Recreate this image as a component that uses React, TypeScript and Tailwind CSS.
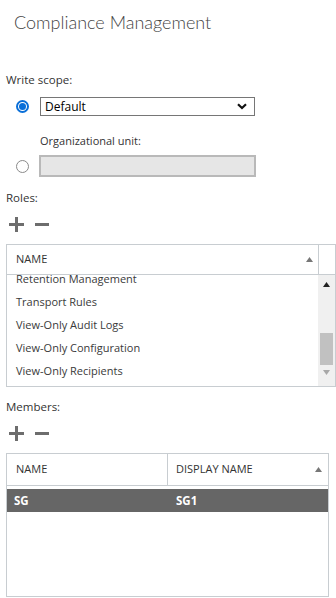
import React from "react";

const font = { fontFamily: '"Open Sans", "Noto Sans", sans-serif' };

function PlusMinus() {
  return (
    <div className="flex items-center h-[14px] pl-[9px] gap-[11px]">
      <svg width="15" height="15" viewBox="0 0 15 15">
        <rect x="6" y="0" width="3" height="15" fill="#6d6d6d" />
        <rect x="0" y="6" width="15" height="3" fill="#6d6d6d" />
      </svg>
      <svg width="14" height="15" viewBox="0 0 14 15">
        <rect x="0" y="6" width="14" height="3" fill="#6d6d6d" />
      </svg>
    </div>
  );
}

function SortUp({ color = "#777" }: { color?: string }) {
  return (
    <svg width="7" height="5" viewBox="0 0 7 5">
      <polygon points="3.5,0 7,5 0,5" fill={color} />
    </svg>
  );
}

export default function App() {
  const roles = [
    "Retention Management",
    "Transport Rules",
    "View-Only Audit Logs",
    "View-Only Configuration",
    "View-Only Recipients",
  ];
  return (
    <div
      className="w-[336px] h-[598px] bg-white overflow-hidden text-[#333]"
      style={font}
    >
      <div
        className="pt-[8px] pl-[14px] text-[18px] leading-[28px] font-light text-[#444]"
        style={{ fontFamily: 'Lato, "Open Sans", sans-serif' }}
      >
        Compliance Management
      </div>

      <div className="mt-[36px] pl-[6px] text-[11.5px] leading-[16px]">Write scope:</div>

      <div className="mt-[9px] flex items-center h-[19px]">
        <div className="w-[39px] flex justify-center pl-[5px]">
          <span className="w-[13px] h-[13px] rounded-full border-[2px] border-[#0a6fd8] flex items-center justify-center">
            <span className="w-[7px] h-[7px] rounded-full bg-[#0a6fd8]" />
          </span>
        </div>
        <div className="ml-[1px] w-[215px] h-[19px] border border-[#767676] bg-white flex items-center justify-between pl-[4px] pr-[7px]">
          <span className="text-[12px] text-black leading-none">Default</span>
          <svg width="10" height="7" viewBox="0 0 10 7">
            <polyline points="1,1.2 5,5 9,1.2" fill="none" stroke="#111" strokeWidth="2.2" />
          </svg>
        </div>
      </div>

      <div className="mt-[17px] pl-[40px] text-[11px] leading-[16px]">Organizational unit:</div>

      <div className="mt-[6px] flex items-center h-[22px]">
        <div className="w-[39px] flex justify-center pl-[5px]">
          <span className="w-[13px] h-[13px] rounded-full border border-[#8a8a8a] bg-white" />
        </div>
        <div className="w-[217px] h-[22px] border-[2px] border-[#b9b9b9] bg-[#e6e6e6]" />
      </div>

      <div className="mt-[13px] pl-[6px] text-[11.5px] leading-[16px]">Roles:</div>

      <div className="mt-[11px]">
        <PlusMinus />
      </div>

      <div className="mt-[13px] ml-[6px] w-[330px] border border-[#c8cdd1]">
        <div className="flex h-[30px] border-b border-[#c8cdd1]">
          <div className="flex-1 flex items-center justify-between pl-[9px] pr-[5px] border-r border-[#c8cdd1]">
            <span className="text-[11px]">NAME</span>
            <SortUp />
          </div>
          <div className="w-[16px]" />
        </div>
        <div className="flex h-[111px]">
          <div className="flex-1 overflow-hidden">
            <div className="-mt-[7px]">
              {roles.map((r) => (
                <div key={r} className="h-[23px] flex items-center pl-[9px] text-[11px] text-[#3a3a3a]">
                  {r}
                </div>
              ))}
            </div>
          </div>
          <div className="w-[17px] bg-[#f0f0f0] flex flex-col items-center">
            <div className="mt-[7px]">
              <SortUp color="#222" />
            </div>
            <div className="mt-[46px] w-[13px] h-[32px] bg-[#c1c1c1]" />
            <div className="mt-[5px] rotate-180">
              <SortUp color="#a8a8a8" />
            </div>
          </div>
        </div>
      </div>

      <div className="mt-[12px] pl-[6px] text-[11.5px] leading-[16px]">Members:</div>

      <div className="mt-[11px]">
        <PlusMinus />
      </div>

      <div className="mt-[13px] ml-[6px] w-[323px] h-[144px] border border-[#c8cdd1]">
        <div className="flex h-[32px] border-b border-[#c8cdd1]">
          <div className="w-[161px] flex items-center pl-[9px] border-r border-[#c8cdd1]">
            <span className="text-[11px]">NAME</span>
          </div>
          <div className="flex-1 flex items-center justify-between pl-[8px] pr-[6px]">
            <span className="text-[11px]">DISPLAY NAME</span>
            <SortUp />
          </div>
        </div>
        <div className="mt-[3px] h-[23px] bg-[#666] flex items-center text-white font-bold text-[11.5px]">
          <div className="w-[162px] pl-[7px]">SG</div>
          <div className="pl-[7px]">SG1</div>
        </div>
      </div>
    </div>
  );
}
